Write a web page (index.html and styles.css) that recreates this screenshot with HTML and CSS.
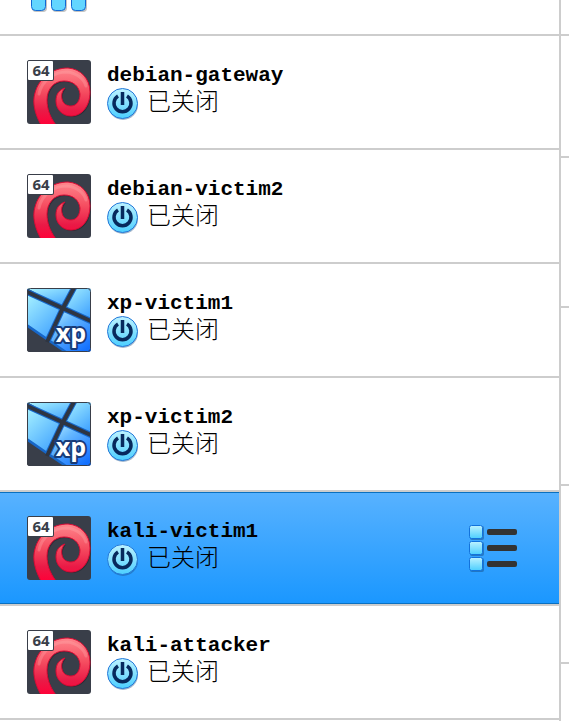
FILE: index.html
```html
<!DOCTYPE html>
<html lang="zh-CN">
<head>
<meta charset="utf-8">
<title>虚拟机</title>
<link rel="stylesheet" href="styles.css">
</head>
<body>
<svg class="defs" aria-hidden="true">
  <defs>
    <linearGradient id="cyan" x1="0" y1="0" x2="0" y2="1">
      <stop offset="0" stop-color="#bdf2ff"/><stop offset="1" stop-color="#4ccfff"/>
    </linearGradient>
    <linearGradient id="red" x1="0" y1="0" x2="0" y2="1">
      <stop offset="0" stop-color="#ff858c"/><stop offset=".4" stop-color="#f65062"/><stop offset=".75" stop-color="#ea1a46"/><stop offset="1" stop-color="#ff0038"/>
    </linearGradient>
    <linearGradient id="pane" x1="0.1" y1="0" x2="0.8" y2="1">
      <stop offset="0" stop-color="#a6f1ff"/><stop offset="1" stop-color="#3ea0ff"/>
    </linearGradient>
    <linearGradient id="paneLow" x1="0" y1="0" x2="0.8" y2="1">
      <stop offset="0" stop-color="#c4f6ff"/><stop offset=".4" stop-color="#65b8ff"/><stop offset="1" stop-color="#1471ff"/>
    </linearGradient>
    <clipPath id="tile"><rect width="64" height="64" rx="3"/></clipPath>
  </defs>
  <symbol id="debian" viewBox="0 0 64 64">
    <g clip-path="url(#tile)">
      <rect width="64" height="64" fill="#393e49"/>
      <path transform="translate(1 1)" fill="#22252d" opacity=".6" d="M14 65C8 54 5 43 8 33C12 18 25 8 41 8C54 9 63 19 63 32C63 46 55 56 44 56C35 56 29 49 29 41C29 34 32 30 38 28C35 31 34 35 35 39C36 44 40 46 44 46C50 46 53 40 53 34C52 26 46 21 37 21C27 21 20 29 20 40C20 49 23 57 29 65Z"/>
      <path fill="url(#red)" stroke="#d90b35" d="M14 65C8 54 5 43 8 33C12 18 25 8 41 8C54 9 63 19 63 32C63 46 55 56 44 56C35 56 29 49 29 41C29 34 32 30 38 28C35 31 34 35 35 39C36 44 40 46 44 46C50 46 53 40 53 34C52 26 46 21 37 21C27 21 20 29 20 40C20 49 23 57 29 65Z"/>
      <path fill="none" stroke="#ffb2b4" stroke-width="3" stroke-linecap="round" opacity=".3" d="M12 34C15 20 27 12 40 12C50 13 57 19 59 26"/>
      <rect x="-2" y="-2" width="29" height="23" rx="2" fill="#393e49"/>
      <rect x="1" y="1" width="25" height="19" rx="1" fill="#fff"/>
      <text class="bits" x="14" y="16">64</text>
    </g>
  </symbol>
  <symbol id="xp" viewBox="0 0 64 64">
    <g clip-path="url(#tile)">
      <rect width="64" height="64" fill="#393e49"/>
      <path fill="url(#pane)" d="M0 0H47L35 20Z"/>
      <path fill="url(#pane)" d="M48 0H64V33L36 20Z"/>
      <path fill="url(#pane)" d="M0 4L34 20L20 51L0 38Z"/>
      <path fill="url(#paneLow)" d="M36 22L64 34V64H38L21 52Z"/>
      <path fill="none" stroke="#1767c9" stroke-width="6" d="M-2 3L66 34M48-2L35 22L20 54M-2 38L40 67"/>
      <path fill="#393e49" d="M0 39L38 65H0Z"/>
      <path fill="none" stroke="#2e3542" stroke-width="4" d="M-2 3L66 34M48-2L35 22L20 54"/>
      <text class="xp-label" x="44" y="54">xp</text>
      <rect x=".5" y=".5" width="63" height="63" rx="3" fill="none" stroke="#393e49"/>
    </g>
  </symbol>
  <symbol id="power" viewBox="0 0 32 32">
    <circle cx="16" cy="17" r="15" fill="#1a4a80" opacity=".4"/>
    <circle cx="15.5" cy="15.5" r="15" fill="url(#cyan)" stroke="#2478d8"/>
    <path fill="none" stroke="#07295d" stroke-width="3.5" d="M11 8A8.5 8.5 0 1 0 20 8M15.5 4V17"/>
  </symbol>
  <symbol id="list" viewBox="0 0 50 48">
    <g fill="#174f8a" opacity=".5">
      <rect x="1" y="2" width="14" height="14" rx="2"/><rect x="1" y="18" width="14" height="14" rx="2"/><rect x="1" y="34" width="14" height="14" rx="2"/>
    </g>
    <g fill="url(#cyan)" stroke="#1272dc">
      <rect x=".5" y="1.5" width="13" height="13" rx="2"/><rect x=".5" y="17.5" width="13" height="13" rx="2"/><rect x=".5" y="33.5" width="13" height="13" rx="2"/>
    </g>
    <g fill="#333">
      <rect x="18" y="5" width="30" height="6" rx="2"/><rect x="18" y="21" width="30" height="6" rx="2"/><rect x="18" y="37" width="30" height="6" rx="2"/>
    </g>
  </symbol>
  <symbol id="tools" viewBox="0 0 58 12">
    <g fill="#555" opacity=".35">
      <rect x="1" y="-10" width="15" height="22" rx="4"/><rect x="21" y="-10" width="15" height="22" rx="4"/><rect x="41" y="-10" width="15" height="22" rx="4"/>
    </g>
    <g fill="#63d6ff" stroke="#1169d5">
      <rect x=".5" y="-10" width="14" height="20.5" rx="4"/><rect x="20.5" y="-10" width="14" height="20.5" rx="4"/><rect x="40.5" y="-10" width="14" height="20.5" rx="4"/>
    </g>
  </symbol>
</svg>
<div class="window">
  <main class="sidebar">
    <div class="tools"><svg class="tools-icon" aria-hidden="true"><use href="#tools"/></svg></div>
    <ul class="machines">
      <li class="machine">
        <svg class="os" aria-hidden="true"><use href="#debian"/></svg>
        <div class="info"><div class="name">debian-gateway</div><div class="state"><svg class="power" aria-hidden="true"><use href="#power"/></svg><span>已关闭</span></div></div>
      </li>
      <li class="machine">
        <svg class="os" aria-hidden="true"><use href="#debian"/></svg>
        <div class="info"><div class="name">debian-victim2</div><div class="state"><svg class="power" aria-hidden="true"><use href="#power"/></svg><span>已关闭</span></div></div>
      </li>
      <li class="machine">
        <svg class="os" aria-hidden="true"><use href="#xp"/></svg>
        <div class="info"><div class="name">xp-victim1</div><div class="state"><svg class="power" aria-hidden="true"><use href="#power"/></svg><span>已关闭</span></div></div>
      </li>
      <li class="machine">
        <svg class="os" aria-hidden="true"><use href="#xp"/></svg>
        <div class="info"><div class="name">xp-victim2</div><div class="state"><svg class="power" aria-hidden="true"><use href="#power"/></svg><span>已关闭</span></div></div>
      </li>
      <li class="machine selected">
        <svg class="os" aria-hidden="true"><use href="#debian"/></svg>
        <div class="info"><div class="name">kali-victim1</div><div class="state"><svg class="power" aria-hidden="true"><use href="#power"/></svg><span>已关闭</span></div></div>
        <button class="menu" type="button" aria-label="菜单"><svg class="menu-icon" aria-hidden="true"><use href="#list"/></svg></button>
      </li>
      <li class="machine">
        <svg class="os" aria-hidden="true"><use href="#debian"/></svg>
        <div class="info"><div class="name">kali-attacker</div><div class="state"><svg class="power" aria-hidden="true"><use href="#power"/></svg><span>已关闭</span></div></div>
      </li>
    </ul>
  </main>
  <aside class="details">
    <div class="section head"></div>
    <div class="section general"></div>
    <div class="section system"></div>
    <div class="section display"></div>
    <div class="section storage"></div>
  </aside>
</div>
</body>
</html>
```
FILE: styles.css
```css
* { box-sizing: border-box; }
body {
  margin: 0;
  background: #fff;
  color: #000;
  font-family: "Liberation Mono", "Noto Sans CJK SC", monospace;
}
.defs { position: absolute; width: 0; height: 0; }
.window { display: flex; min-height: 100vh; }
.sidebar { flex: 1; border-right: 2px solid #cdcdcd; }
.details { flex: 0 0 8px; }
.section { border-bottom: 2px solid #cdcdcd; }
.head { height: 36px; }
.general { height: 122px; }
.system { height: 150px; }
.display, .storage { height: 178px; }
.tools {
  height: 36px;
  padding-left: 31px;
  border-bottom: 2px solid #cdcdcd;
}
.tools-icon { display: block; width: 58px; height: 12px; }
.machines { margin: 0; padding: 0; list-style: none; }
.machine {
  display: flex;
  align-items: flex-start;
  gap: 16px;
  padding: 24px 40px 24px 27px;
  border-bottom: 2px solid #cdcdcd;
}
.selected {
  background: linear-gradient(#58b2ff, #1a97ff) padding-box;
  box-shadow: inset 0 1px #0a70c0, inset 0 -1px #0a70c0;
}
.os { flex: none; width: 64px; height: 64px; }
.info { flex: 1; height: 64px; }
.name {
  padding-top: 4px;
  font-size: 21px;
  font-weight: 700;
  line-height: 24px;
}
.state {
  display: flex;
  gap: 8px;
  font-family: "Noto Sans CJK SC", sans-serif;
  font-size: 24px;
  font-weight: 300;
  line-height: 24px;
}
.power { width: 32px; height: 32px; }
.menu {
  align-self: center;
  padding: 0;
  border: 0;
  background: none;
}
.menu-icon { display: block; width: 50px; height: 48px; }
.bits {
  fill: #393e49;
  font: 700 15px "Open Sans", "Noto Sans", sans-serif;
  text-anchor: middle;
}
.xp-label {
  fill: #fff;
  stroke: #173b78;
  stroke-width: 4px;
  stroke-linejoin: round;
  paint-order: stroke;
  font: 700 25px "Open Sans", "Noto Sans", sans-serif;
  text-anchor: middle;
}
```
